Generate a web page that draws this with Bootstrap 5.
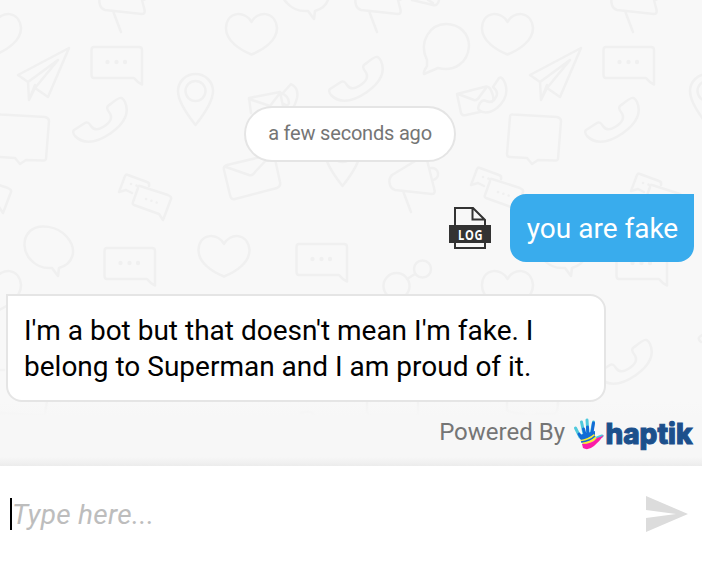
<!DOCTYPE html>
<html lang="en">
<head>
<meta charset="utf-8">
<meta name="viewport" content="width=device-width, initial-scale=1">
<title>Chat</title>
<link rel="stylesheet" href="https://cdn.jsdelivr.net/npm/bootstrap@5.3.0/dist/css/bootstrap.min.css">
<style>
body{font-family:Roboto,"Liberation Sans",sans-serif;background:#fff;height:562px;color:#000}
.thread{height:466px;background:#f8f8f8;padding-top:106px}
.doodles{position:absolute;inset:0;width:702px;height:466px;pointer-events:none}
.thread>:not(.doodles){position:relative}
.stamp{width:212px;height:56px;border:2px solid #e5e5e5;font-size:20px;letter-spacing:-.2px;color:#757575;margin-left:-2px;padding-bottom:2px}
.outgoing{margin-top:32px;padding-right:8px;gap:19px}
.bubble-out{width:184px;height:68px;background:#39aced;border-radius:16px 0 16px 16px;font-size:28px;padding:2px 0 0 1px}
.bubble-in{width:600px;height:108px;margin:32px 0 0 6px;border:2px solid #e5e5e5;border-radius:0 16px 16px 16px;padding:17px 16px 15px;font-size:28px;line-height:36px}
.powered{height:64px;font-size:24px;color:#757575;padding:0 8px 4px 0;background:linear-gradient(#f7f7f700 0,#f7f7f7 14px,#f7f7f7 55px,#ececec 64px)}
.brand-mark{width:121px;height:40px;overflow:visible}
.composer{height:96px;padding:0 14px 0 10px}
.caret{width:2px;height:32px;background:#000}
.hint{font-size:28px;font-style:italic;letter-spacing:.3px;color:#bdbdbd;padding-top:2px}
</style>
</head>
<body class="overflow-hidden">
<main class="thread position-relative overflow-hidden d-flex flex-column">
<svg class="doodles" viewBox="0 0 702 466" fill="none" stroke="#f0f0f0" stroke-width="2.5" stroke-linejoin="round" stroke-linecap="round" aria-hidden="true">
<defs>
<g id="talk"><path d="M94 47H139Q142 47 142 50V84.500Q138 83 134 78H94Q91.500 78 91.500 75V50Q91.500 47 94 47Z"/><g fill="#f0f0f0" stroke="none"><circle cx="107.500" cy="62" r="2.200"/><circle cx="116.500" cy="62" r="2.200"/><circle cx="125" cy="62" r="2.200"/></g></g>
<path id="love" d="M251.500 22C246 11 227 10 226 28C226 41 240 50 251.500 54.500C263 50 277 41 277 28C275 10 257 11 251.500 22Z"/>
<path id="call" d="M121 98Q119 97 108 106Q106 108 109 112Q115 120 103 127Q95 132 91 126Q88 121 85 123L74 130Q72 132 75 136Q88 149 111 133Q132 118 125 102Q123 98 121 98Z"/>
<path id="plane" d="M69 48L18 75L28 82L29 100L35 88L48 97ZM69 48L48 97M28 82L58 60L35 88M29 100L35 85"/>
<g id="pin"><path d="M195.500 125Q178 103 178 91A17.500 17 0 0 1 213 91Q213 103 195.500 125Z"/><circle cx="195.500" cy="91" r="10"/></g>
<path id="board" d="M1 114.500L45 117Q49 118 49 121L46 159Q45 161 43 160.500L26 160L20 164L15 158L-2 157Q-5 157-5 154L-2 117Q-2 114 1 114.500Z"/>
<path id="horn" d="M425 155L392 175Q388 179 390 185Q391 189 395 190L432 194Q436 194 434 188L426 156M403 191L411 212M431 168A6 6 0 0 1 433 180"/>
<path id="say" d="M52 268Q39 269 31 260C23 252 22 239 30 231C39 223 58 226 67 237C78 250 73 264 59 268L58 276Z"/>
<g id="pair"><path d="M132 193L126 190L119 192L125 176Q126 174 128 175L147 182Q150 183 149 186"/><path d="M140 186L168 195Q172 197 171 199L163 220L159 214L134 205Q132 204 133 202L138 188Q138 185 140 186Z"/><path stroke-dasharray=".1 5.500" d="M146 199L158 203M131 184L138 186"/></g>
<path id="mail" d="M227 165L269 155Q273 155 275 159L280 182Q281 186 277 188L235 199Q231 200 230 195L224 170Q223 166 227 165ZM226 167L249 175Q253 176 255 172L270 156"/>
</defs>
<use href="#talk"/><use href="#talk" x="512"/><use href="#talk" x="13" y="201"/><use href="#talk" x="205" y="197"/><use href="#talk" x="525" y="201"/>
<use href="#love"/><use href="#love" x="256"/><use href="#love" x="-256"/><use href="#love" x="-27.500" y="222"/><use href="#love" x="256" y="257"/><use href="#love" x="-256" y="257"/>
<use href="#call"/><use href="#call" x="512"/><use href="#call" x="256" y="-41"/><use href="#call" x="525" y="242"/>
<use href="#plane"/><use href="#plane" x="512"/><use href="#pin"/><use href="#pin" x="512"/><use href="#pin" x="147" y="61"/>
<use href="#board"/><use href="#board" x="512"/>
<use href="#horn"/><use href="#horn" x="-34" y="-180"/><use href="#horn" x="-290" y="-180"/><use href="#horn" x="222" y="-180"/>
<use href="#say"/><use href="#say" x="256" y="-257"/><use href="#say" x="513"/>
<use href="#pair"/><use href="#pair" x="-160" y="-7"/><use href="#pair" x="352" y="-7"/><use href="#pair" x="512" y="-1"/>
<use href="#mail"/>
<path d="M427 60C418 42 430 24 446 24C460 24 469 34 469 46C468 63 454 72 438 68L424 74Q423 72 427 66Z"/>
<path d="M249 98L280 92L283 106M249 98L251 113M249 99L270 106L280 93M281 93Q289 96 289 103Q288 107 284 104M282 94L291 84Q299 88 297 98Q295 106 292 109M412 0L433 5Q438 6 439 0M428 0L433 3"/>
<path d="M457 94L484 87Q490 84 493 96Q494 101 492 102M457 94L461 113Q462 116 466 115L480 112M458 94L474 100Q477 101 480 96L486 88M493 87L499 78Q502 76 505 83Q510 97 497 108Q486 116 479 110Q477 108 480 103Q483 99 486 101Q493 104 496 97Q499 92 493 87"/>
<circle cx="396.500" cy="286" r="13"/><circle cx="422.500" cy="269" r="8.500"/><path d="M407 279L415 274M702 335Q696 338 701 342"/>
<g stroke-opacity=".6"><path d="M0 370H4M47 401L45 414Q44 416 42 415.500L0 413M367 401V412Q368 416 371 416H415Q418 416 418 413V401M507 401V410Q509 413 524 414L529 417L537 414L554 414Q558 414 558 401M301 413Q313 410 314 416"/></g>
</svg>
<div class="stamp rounded-pill bg-white d-flex align-items-center justify-content-center align-self-center flex-shrink-0">a few seconds ago</div>
<div class="outgoing d-flex justify-content-end align-items-center">
<svg width="42" height="42" viewBox="0 0 42 42" role="img" aria-label="LOG file"><path d="M6 1H24L36 13V41H6ZM23.500 1V12.500H36" fill="none" stroke="#333" stroke-width="2"/><path d="M0 18H42V36H0Z" fill="#333"/><g transform="translate(9 33) scale(.74 1)"><text fill="#fff" font-family="Open Sans,sans-serif" font-size="15" font-weight="700" letter-spacing="1">LOG</text></g></svg>
<div class="bubble-out text-white d-flex align-items-center justify-content-center">you are fake</div>
</div>
<div class="bubble-in bg-white">I'm a bot but that doesn't mean I'm fake. I belong to Superman and I am proud of it.</div>
<footer class="powered d-flex justify-content-end align-items-center">
<span class="me-2">Powered By</span>
<svg class="brand-mark" viewBox="573 412 121 40" role="img" aria-label="haptik">
<g fill="none" stroke-linecap="round" stroke-width="3">
<path stroke="#4fc9dc" d="M575.500 428L580 437M581.500 422L584 434M587 420L588 434M593.500 422L591 435M602 436L597 438"/>
<path stroke="#126bd6" d="M579 434L582 439M583.500 429L586 438M587.500 427L588 438M593.500 423L591 439"/>
</g>
<path fill="#126bd6" d="M579 435L595 431L595 437L583 444Z"/><path fill="#f7ec35" d="M580 440Q588 439 594 434L597 439L585 446Z"/><path fill="none" stroke="#126bd6" stroke-width="1.500" d="M581 442Q590 441 595 436"/><path fill="#fc1ca6" d="M582 444Q592 444 597 438Q601 437 604 435Q599 442 594 446Q588 451 583 448Z"/>
<text x="605.500" y="443.500" textLength="87" lengthAdjust="spacingAndGlyphs" fill="#1c508c" stroke="#1c508c" stroke-width="1.100" font-family="Inter,sans-serif" font-size="29" font-weight="800">haptik</text>
</svg>
</footer>
</main>
<section class="composer d-flex align-items-center bg-white">
<span class="caret"></span><span class="hint flex-grow-1">Type here...</span>
<svg width="42" height="36" viewBox="0 0 42 36" aria-label="Send"><path d="M0 0L42 18L0 36V22L30 18L0 14Z" fill="#dcdcdc"/></svg>
</section>
<script src="https://cdn.jsdelivr.net/npm/bootstrap@5.3.0/dist/js/bootstrap.bundle.min.js"></script>
</body>
</html>
